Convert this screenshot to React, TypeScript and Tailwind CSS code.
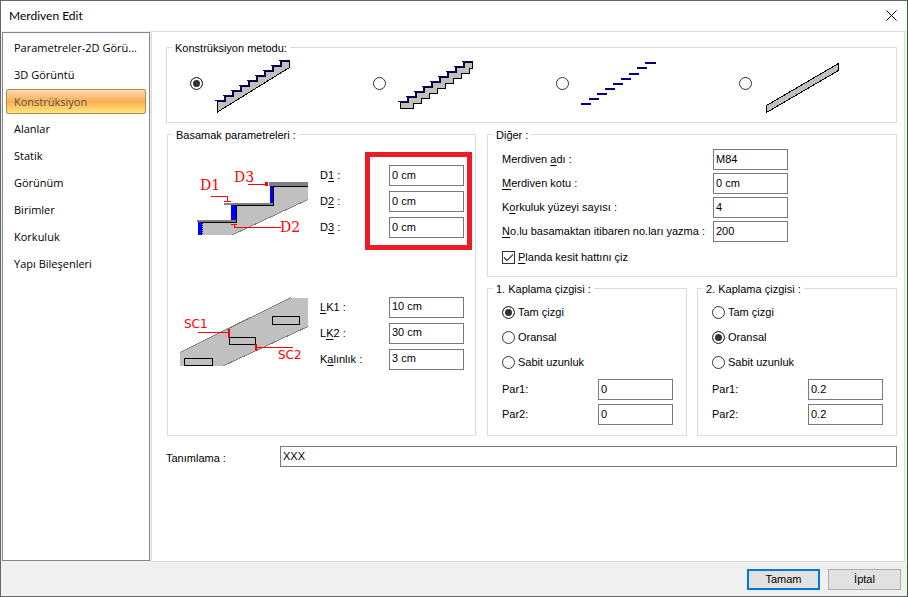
import React, { useState } from "react";

const menuItems = [
  "Parametreler-2D Görü...",
  "3D Görüntü",
  "Konstrüksiyon",
  "Alanlar",
  "Statik",
  "Görünüm",
  "Birimler",
  "Korkuluk",
  "Yapı Bileşenleri",
];

const steps = [0, 1, 2, 3, 4, 5, 6, 7, 8];

const radioClass =
  "size-[13px] shrink-0 appearance-none rounded-full border border-[#333] bg-white checked:bg-[#333] checked:shadow-[inset_0_0_0_2px_white]";

// upper outline of the stairs, every step is 8 wide and 5 high
const stairTop = (y: number) => steps.map((i) => `V${y - 5 * i}H${i === 8 ? 74.5 : 10.5 + 8 * i}`).join("");

const StairNosing: React.FC<{ y: number }> = ({ y }) => (
  <g fill="#000080">
    {steps.map((i) => (
      <React.Fragment key={i}>
        <rect x={8 * i} y={y - 5 * i} width={i === 8 ? 11 : 10} height="1" />
        {i > 0 && <rect x={8 * i + 1} y={y - 5 * i} width="1" height="5" />}
      </React.Fragment>
    ))}
  </g>
);

const SlopedStairs = () => (
  <svg width="78" height="59" viewBox="0 0 78 59" shapeRendering="crispEdges">
    <path d={`M2.5 58${stairTop(47.5)}V13.5Z`} fill="#c0c0c0" stroke="#000" />
    <StairNosing y={46} />
  </svg>
);

const SteppedStairs = () => (
  <svg width="78" height="59" viewBox="0 0 78 59" shapeRendering="crispEdges">
    <path
      d={`M2.5 54.5${stairTop(48.5)}V14.5H71.5${[1, 2, 3, 4, 5, 6, 7, 8]
        .map((i) => `V${14.5 + 5 * i}H${i === 8 ? 2.5 : 71.5 - 8 * i}`)
        .join("")}Z`}
      fill="#c0c0c0"
      stroke="#000"
    />
    <StairNosing y={47} />
  </svg>
);

const TreadsOnly = () => (
  <svg width="78" height="59" viewBox="0 0 78 59" shapeRendering="crispEdges">
    {steps.map((i) => (
      <rect key={i} x={8 * i} y={(i > 6 ? 48 : 49) - 5 * i} width={i === 8 ? 11 : 10} height="2" fill="#000080" />
    ))}
  </svg>
);

const PlainSlab = () => (
  <svg width="78" height="59" viewBox="0 0 78 59" shapeRendering="crispEdges">
    <path d="M2.5 51.5L74.5 9.5V16.5L2.5 58.5Z" fill="#c0c0c0" stroke="#000" />
  </svg>
);

const StepDrawing = () => (
  <svg width="128" height="80" viewBox="0 0 128 80" shapeRendering="crispEdges" className="shrink-0">
    <path d="M22 62H57V44H94V25H128V39L52 74H22Z" fill="#c0c0c0" />
    <path d="M52 74L128 38.5" stroke="#808080" />
    <path d="M18 61h4v13h-4zM51 44h5v15h-5zM90 25h4v17h-4z" fill="#00f" />
    <path d="M17 59h40v2H17zM44 42h49v2H44zM89 21h39v4H89z" fill="#808080" />
    <path d="M22 61.5H56.5V44.5H93.5V25.5H128" fill="none" stroke="#000" />
    <path d="M22.5 62V74" stroke="#000" strokeDasharray="1 1" />
    <path d="M31 35.5H47.5V40.5M44 40.5H51M68 23.5H86M101 66.5H54.5V63.5M51 63.5H57" fill="none" stroke="#f00" />
    <path d="M85 21h3v4h-3z" fill="#f00" />
    <g fill="#f00" fontFamily="DejaVu Serif, serif" fontSize="14">
      <text x="20" y="29">D1</text>
      <text x="54" y="21">D3</text>
      <text x="100" y="71">D2</text>
    </g>
  </svg>
);

const CoatingDrawing = () => (
  <svg width="128" height="80" viewBox="0 -2 128 80" shapeRendering="crispEdges" className="shrink-0">
    <path d="M0 58L111 3H128V32L43 71H0Z" fill="#c0c0c0" />
    <path d="M0 57.5L111 2.5M128 31.5L43 71" stroke="#808080" />
    <path d="M4.5 63.5h28v7h-28zM49.5 42.5h26v7h-26zM92.5 21.5h27v8h-27z" fill="none" stroke="#000" />
    <path d="M18 37.5H48M77 52.5H113" stroke="#f00" />
    <path d="M48 34h2v9h-2zM75 49h2v7h-2z" fill="#f00" />
    <g fill="#f00" fontFamily="DejaVu Sans, sans-serif" fontSize="12">
      <text x="4" y="33">SC1</text>
      <text x="98" y="64">SC2</text>
    </g>
  </svg>
);

const methods = [SlopedStairs, SteppedStairs, TreadsOnly, PlainSlab];

type GroupProps = { title: string; className?: string; children: React.ReactNode };

const Group: React.FC<GroupProps> = ({ title, className = "", children }) => (
  <fieldset className={`min-w-0 border border-[#dcdcdc] ${className}`}>
    <legend className="ml-[5px] px-[3px] pt-[2px] leading-[11px]">{title}</legend>
    {children}
  </fieldset>
);

const TextBox: React.FC<{ id: string; value: string; wide?: boolean }> = ({ id, value, wide }) => (
  <input
    id={id}
    type="text"
    defaultValue={value}
    className={`h-[21px] border border-[#7a7a7a] bg-white px-[2px] pb-[2px] outline-none ${wide ? "min-w-0 flex-1" : "w-[75px] shrink-0"}`}
  />
);

// label with its access key underlined
const KeyLabel: React.FC<{ id: string; text: string; at?: number; className?: string }> = ({
  id,
  text,
  at = -1,
  className = "",
}) => (
  <label htmlFor={id} className={`leading-[21px] whitespace-nowrap ${className}`}>
    {at < 0 ? (
      text
    ) : (
      <>
        {text.slice(0, at)}
        <span className="underline underline-offset-2">{text[at]}</span>
        {text.slice(at + 1)}
      </>
    )}
  </label>
);

const stepFields = [
  { id: "d1", text: "D1 :", at: 1, value: "0 cm" },
  { id: "d2", text: "D2 :", at: 1, value: "0 cm" },
  { id: "d3", text: "D3 :", at: 1, value: "0 cm" },
];

const coatingFields = [
  { id: "lk1", text: "LK1 :", at: 0, value: "10 cm" },
  { id: "lk2", text: "LK2 :", at: 1, value: "30 cm" },
  { id: "thickness", text: "Kalınlık :", at: 1, value: "3 cm" },
];

const otherFields = [
  { id: "name", text: "Merdiven adı :", at: 9, value: "M84" },
  { id: "level", text: "Merdiven kotu :", at: 0, value: "0 cm" },
  { id: "railing", text: "Korkuluk yüzeyi sayısı :", at: 1, value: "4" },
  { id: "number", text: "No.lu basamaktan itibaren no.ları yazma :", at: 0, value: "200" },
];

const CoatingLine: React.FC<{ no: number; selected: string; value: string }> = ({ no, selected, value }) => (
  <Group title={`${no}. Kaplama çizgisi :`}>
    <div className="pt-[5px] pr-[13px] pb-[10px] pl-[14px]">
      {["Tam çizgi", "Oransal", "Sabit uzunluk"].map((option) => (
        <label key={option} className="flex h-[25px] items-center gap-[3px]">
          <input type="radio" name={`line${no}`} defaultChecked={option === selected} className={radioClass} />
          {option}
        </label>
      ))}
      <div className="mt-1 flex flex-col gap-1">
        {["Par1", "Par2"].map((par) => (
          <div key={par} className="flex justify-between">
            <KeyLabel id={`${par}-${no}`} text={`${par}:`} />
            <TextBox id={`${par}-${no}`} value={value} />
          </div>
        ))}
      </div>
    </div>
  </Group>
);

const App: React.FC = () => {
  const [active, setActive] = useState("Konstrüksiyon");

  return (
    <div className="flex min-h-screen flex-col border border-[#666] border-r-[#1f6b2a] bg-[#f0f0f0] font-['Liberation_Sans',Arial,sans-serif] text-[11px] text-black">
      <header className="flex h-[30px] items-center justify-between bg-white pr-[10px] pl-2 font-['Lato','Open_Sans',sans-serif] text-[12px]">
        <h1>Merdiven Edit</h1>
        <button type="button" aria-label="Kapat" className="pb-[2px]">
          <svg width="11" height="11" viewBox="0 0 11 11" stroke="#000">
            <path d="M.5 .5L10.5 10.5M10.5 .5L.5 10.5" />
          </svg>
        </button>
      </header>

      <div className="flex flex-1 gap-px pr-[2px] pl-px">
        <nav className="my-px flex w-[148px] shrink-0 flex-col gap-[2px] border border-[#828790] bg-white px-[3px] pt-[2px] font-['Open_Sans','Noto_Sans',sans-serif]">
          {menuItems.map((item) => (
            <button
              key={item}
              type="button"
              onClick={() => setActive(item)}
              className={`h-[25px] border px-[7px] pt-px text-left whitespace-nowrap ${
                item === active
                  ? "rounded-[2px] border-[#b08c50] bg-linear-to-b from-[#fcd9b0] via-[#f9b050] to-[#fee67c] text-[#555]"
                  : "border-transparent"
              }`}
            >
              {item}
            </button>
          ))}
        </nav>

        <main className="flex min-w-0 flex-1 flex-col border border-[#dcdcdc] bg-white pt-[9px] pr-[7px] pl-[14px]">
          <Group title="Konstrüksiyon metodu:">
            <div className="flex justify-between pr-[47px] pb-[9px] pl-[23px]">
              {methods.map((Drawing, i) => (
                <label key={i} className="flex w-[110px] items-center gap-3">
                  <input
                    type="radio"
                    name="method"
                    aria-label={`Metod ${i + 1}`}
                    defaultChecked={i === 0}
                    className={radioClass}
                  />
                  <Drawing />
                </label>
              ))}
            </div>
          </Group>

          <div className="mt-[5px] grid grid-cols-[309fr_410fr] gap-[11px] pl-px">
            <Group title="Basamak parametreleri :">
              <div className="flex items-center pt-[11px] pl-3">
                <StepDrawing />
                <div className="ml-3 flex w-[45px] shrink-0 flex-col gap-[5px]">
                  {stepFields.map((f) => (
                    <KeyLabel key={f.id} id={f.id} text={f.text} at={f.at} />
                  ))}
                </div>
                <div className="flex flex-col gap-[5px] border-5 border-[#ed1c24] pt-2 pr-[3px] pb-[7px] pl-[19px]">
                  {stepFields.map((f) => (
                    <TextBox key={f.id} id={f.id} value={f.value} />
                  ))}
                </div>
              </div>
              <div className="mt-[43px] flex items-center pl-3">
                <CoatingDrawing />
                <div className="ml-3 flex w-[69px] shrink-0 flex-col gap-[5px]">
                  {coatingFields.map((f) => (
                    <KeyLabel key={f.id} id={f.id} text={f.text} at={f.at} />
                  ))}
                </div>
                <div className="flex flex-col gap-[5px]">
                  {coatingFields.map((f) => (
                    <TextBox key={f.id} id={f.id} value={f.value} />
                  ))}
                </div>
              </div>
            </Group>

            <div className="flex flex-col gap-[5px]">
              <Group title="Diğer :">
                <div className="flex flex-col gap-[3px] pt-2 pl-[14px]">
                  {otherFields.map((f) => (
                    <div key={f.id} className="flex">
                      <KeyLabel id={f.id} text={f.text} at={f.at} className="w-[211px]" />
                      <TextBox id={f.id} value={f.value} />
                    </div>
                  ))}
                </div>
                <div className="mt-[7px] mb-[10px] flex h-[17px] items-center gap-[3px] pl-[14px]">
                  <span className="relative flex size-[13px]">
                    <input
                      id="section"
                      type="checkbox"
                      defaultChecked
                      className="peer size-[13px] appearance-none border border-[#333] bg-white"
                    />
                    <svg
                      className="pointer-events-none absolute inset-0 hidden peer-checked:block"
                      width="13"
                      height="13"
                      viewBox="0 0 13 13"
                      fill="none"
                      stroke="#333"
                      strokeWidth="1.2"
                    >
                      <path d="M2 6.5L5 9.5L11 3.5" />
                    </svg>
                  </span>
                  <KeyLabel id="section" text="Planda kesit hattını çiz" at={0} />
                </div>
              </Group>
              <div className="grid grid-cols-2 gap-[10px]">
                <CoatingLine no={1} selected="Tam çizgi" value="0" />
                <CoatingLine no={2} selected="Oransal" value="0.2" />
              </div>
            </div>
          </div>

          <div className="mt-[10px] flex">
            <KeyLabel id="description" text="Tanımlama :" className="w-[114px] pt-[2px]" />
            <TextBox id="description" value="XXX" wide />
          </div>
        </main>
      </div>

      <footer className="flex h-[34px] items-center justify-end gap-2 pr-[6px]">
        <button type="button" className="h-[21px] w-[73px] border-2 border-[#0078d7] bg-[#e1e1e1] leading-[17px]">
          Tamam
        </button>
        <button type="button" className="h-[21px] w-[73px] border border-[#adadad] bg-[#e1e1e1] leading-[19px]">
          İptal
        </button>
      </footer>
    </div>
  );
};

export default App;
